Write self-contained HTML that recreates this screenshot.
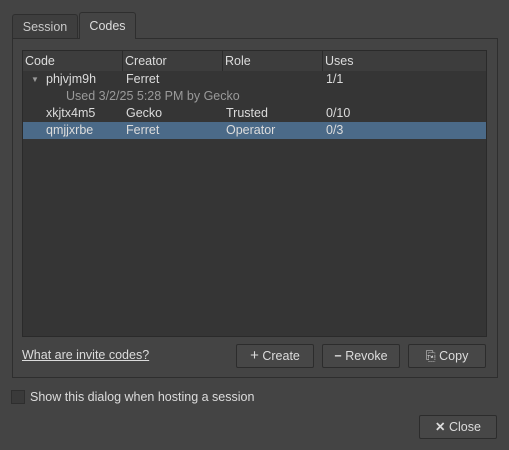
<!DOCTYPE html><html><head><style>
body{margin:0;width:509px;height:450px;background:#444444;font-family:"Liberation Sans",sans-serif;font-size:12.5px;color:#dcdcdc;position:relative;overflow:hidden}
div{position:absolute;box-sizing:border-box}
.tab{border:1px solid #2e2e2e;border-bottom:none;border-radius:3px 3px 0 0;text-align:center}
.btn{border:1px solid #2c2c2c;border-radius:2px;background:#474747;height:24px;line-height:22px;text-align:center;color:#dcdcdc}
.h{top:0;height:20px;line-height:20px;padding-left:2px;border-right:1px solid #2b2b2b;background:#3d3d3d}
.r{height:17px;line-height:17px;left:0;right:0}
.r span{position:absolute}
</style></head><body>
<div class="tab" style="left:12px;top:14px;width:66px;height:25px;line-height:24px;background:#3e3e3e;color:#c8c8c8">Session</div>
<div style="left:12px;top:38px;width:486px;height:340px;border:1px solid #2e2e2e;background:#444"></div>
<div class="tab" style="left:79px;top:12px;width:57px;height:27px;line-height:26px;background:#444">Codes</div>
<div style="left:22px;top:50px;width:465px;height:287px;background:#353535;border:1px solid #2a2a2a">
 <div class="h" style="left:0;width:100px">Code</div>
 <div class="h" style="left:100px;width:100px">Creator</div>
 <div class="h" style="left:200px;width:100px">Role</div>
 <div class="h" style="left:300px;right:0;border-right:none">Uses</div>
 <div class="r" style="top:20px"><span style="left:8px;font-size:8px;color:#999">▼</span><span style="left:23px">phjvjm9h</span><span style="left:103px">Ferret</span><span style="left:303px">1/1</span></div>
 <div class="r" style="top:37px;color:#9a9a9a"><span style="left:43px">Used 3/2/25 5:28 PM by Gecko</span></div>
 <div class="r" style="top:54px"><span style="left:23px">xkjtx4m5</span><span style="left:103px">Gecko</span><span style="left:203px">Trusted</span><span style="left:303px">0/10</span></div>
 <div class="r" style="top:71px;background:#4b6a88"><span style="left:23px">qmjjxrbe</span><span style="left:103px">Ferret</span><span style="left:203px">Operator</span><span style="left:303px">0/3</span></div>
</div>
<div style="left:22px;top:348px;text-decoration:underline;color:#dcdcdc">What are invite codes?</div>
<div class="btn" style="left:236px;top:344px;width:78px"><span style="font-size:15px">+</span> Create</div>
<div class="btn" style="left:322px;top:344px;width:78px"><b>−</b> Revoke</div>
<div class="btn" style="left:408px;top:344px;width:78px">⎘ Copy</div>
<div style="left:11px;top:390px;width:14px;height:14px;border:1px solid #2e2e2e;background:#3a3a3a"></div>
<div style="left:30px;top:390px">Show this dialog when hosting a session</div>
<div class="btn" style="left:419px;top:415px;width:78px"><b>✕</b> Close</div>
</body></html>
